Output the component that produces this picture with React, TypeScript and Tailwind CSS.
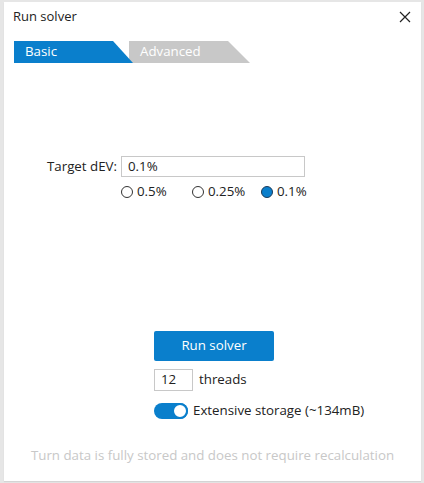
import React from "react";

export default function App() {
  const font = { fontFamily: '"Segoe UI", "Open Sans", "Noto Sans", sans-serif' };
  return (
    <div className="w-[424px] h-[483px] bg-[#e6e6e6] pt-[2px] pl-[4px]" style={font}>
      <div className="w-[417px] h-[479px] bg-white flex flex-col shadow-[0_1px_1px_rgba(0,0,0,0.08)]">
        {/* title */}
        <div className="h-[30px] flex items-center justify-between pl-[9px] pr-[9px]">
          <span className="text-[13px] text-[#222]">Run solver</span>
          <svg width="12" height="12" viewBox="0 0 12 12" className="mr-[1px]">
            <path d="M1 1 L11 11 M11 1 L1 11" stroke="#222" strokeWidth="1.2" />
          </svg>
        </div>
        {/* tabs */}
        <div className="mt-[9px] pl-[10px] flex h-[22px]">
          <div
            className="w-[119px] h-[22px] bg-[#0a7fcc] text-white text-[13.3px] pl-[11px] flex items-center relative z-10"
            style={{ clipPath: "polygon(0 0, 99px 0, 100% 100%, 0 100%)" }}
          >
            Basic
          </div>
          <div
            className="w-[121px] h-[22px] bg-[#c8c8c8] text-white text-[13.3px] pl-[11px] flex items-center -ml-[4px]"
            style={{ clipPath: "polygon(0 0, 99px 0, 100% 100%, 0 100%)" }}
          >
            Advanced
          </div>
        </div>
        {/* form */}
        <div className="mt-[93px] pl-[43px] flex items-center h-[21px]">
          <span className="text-[13.3px] text-[#222] w-[74px]">Target dEV:</span>
          <div className="w-[184px] h-[21px] border border-[#c8c8c8] text-[13.3px] text-[#222] pl-[6px] flex items-center">
            0.1%
          </div>
        </div>
        <div className="mt-[6px] pl-[117px] flex items-center text-[13.3px] text-[#222] h-[18px]">
          <span className="w-[12px] h-[12px] rounded-full border border-[#333] mr-[4px]" />
          <span className="w-[55px]">0.5%</span>
          <span className="w-[12px] h-[12px] rounded-full border border-[#333] mr-[4px]" />
          <span className="w-[53px]">0.25%</span>
          <span className="w-[12px] h-[12px] rounded-full bg-[#0a7fcc] border border-[#1a3a5a] mr-[4px]" />
          <span>0.1%</span>
        </div>
        {/* actions */}
        <div className="mt-[130px] pl-[150px] flex flex-col items-start">
          <div className="w-[120px] h-[30px] bg-[#0a7fcc] rounded-[2px] text-white text-[13.3px] flex items-center justify-center">
            Run solver
          </div>
          <div className="mt-[8px] flex items-center">
            <div className="w-[39px] h-[22px] border border-[#c8c8c8] text-[13.3px] text-[#222] pl-[6px] flex items-center">
              12
            </div>
            <span className="ml-[6px] text-[13.3px] text-[#222]">threads</span>
          </div>
          <div className="mt-[10px] flex items-center">
            <div className="w-[34px] h-[16px] rounded-full bg-[#0a7fcc] relative">
              <div className="absolute right-0 top-0 w-[16px] h-[16px] rounded-full bg-white border-2 border-[#0a7fcc]" />
            </div>
            <span className="ml-[5px] text-[13.3px] text-[#222]">Extensive storage (~134mB)</span>
          </div>
        </div>
        <div className="mt-auto mb-[15px] text-center text-[13.3px] text-[#c8c8c8]">
          Turn data is fully stored and does not require recalculation
        </div>
      </div>
    </div>
  );
}
